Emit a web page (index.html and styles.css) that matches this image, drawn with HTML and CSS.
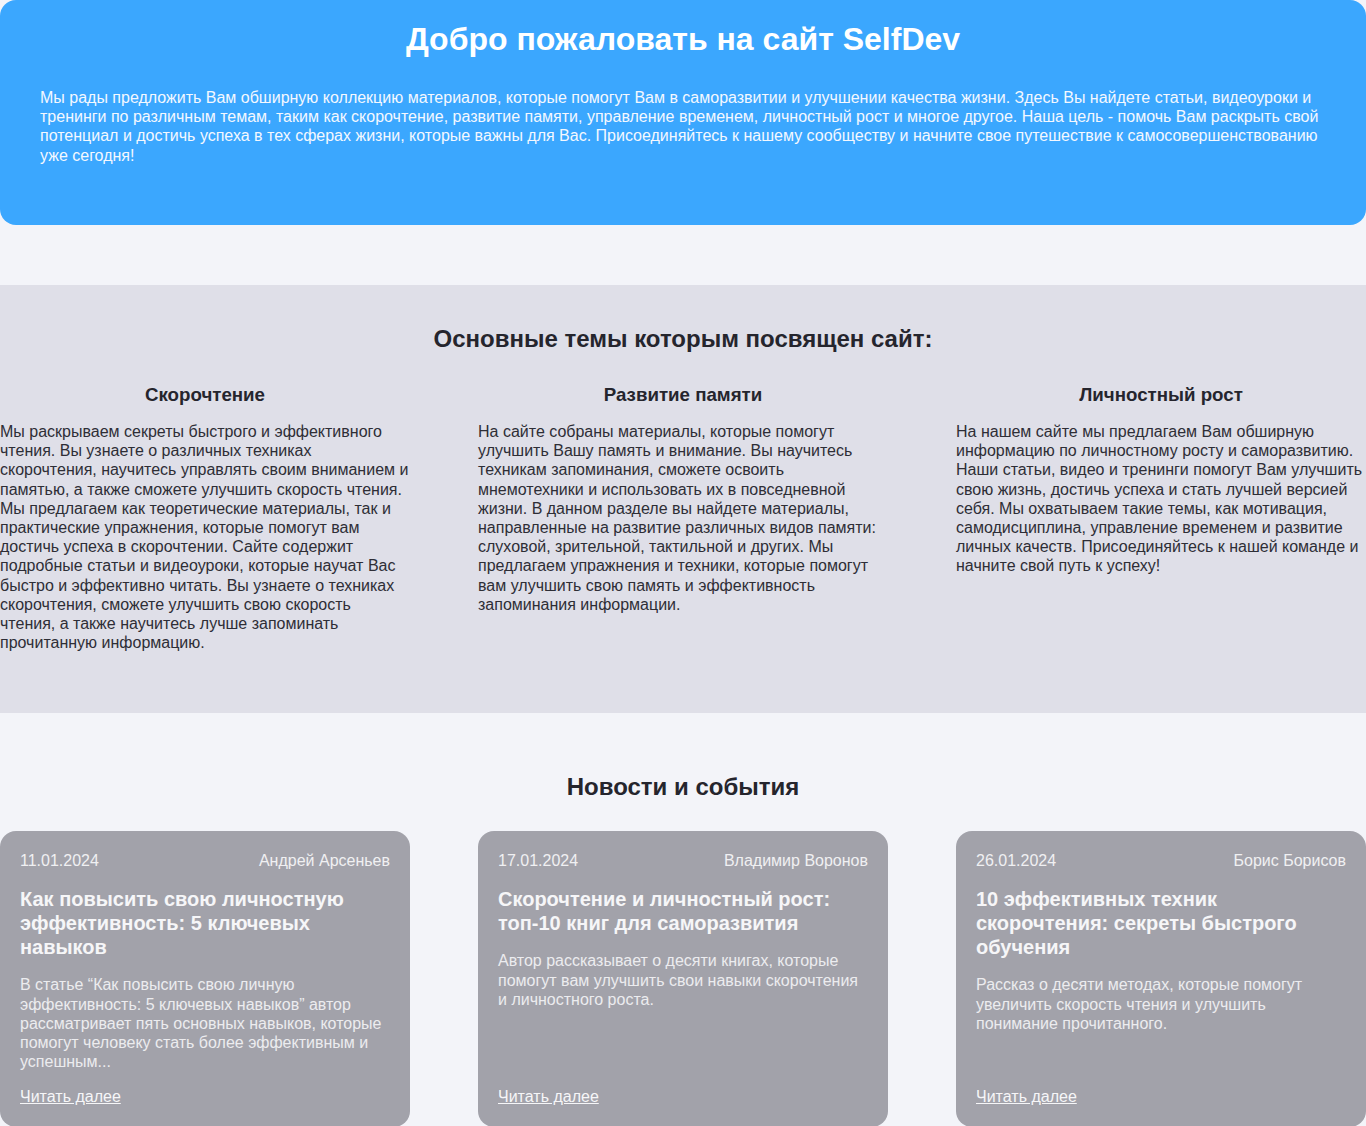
FILE: index.html
```html
<!DOCTYPE html>
<html lang="ru">
<head>
<meta charset="utf-8">
<title>SelfDev</title>
<link rel="stylesheet" href="styles.css">
</head>
<body>
<header class="hero">
  <h1 class="hero-title">Добро пожаловать на сайт SelfDev</h1>
  <p class="hero-text">Мы рады предложить Вам обширную коллекцию материалов, которые помогут Вам в саморазвитии и улучшении качества жизни. Здесь Вы найдете статьи, видеоуроки и тренинги по различным темам, таким как скорочтение, развитие памяти, управление временем, личностный рост и многое другое. Наша цель - помочь Вам раскрыть свой потенциал и достичь успеха в тех сферах жизни, которые важны для Вас. Присоединяйтесь к нашему сообществу и начните свое путешествие к самосовершенствованию уже сегодня!</p>
</header>

<section class="topics">
  <h2 class="section-title">Основные темы которым посвящен сайт:</h2>
  <div class="topic-grid">
    <div class="topic">
      <h3 class="topic-title">Скорочтение</h3>
      <p class="topic-text">Мы раскрываем секреты быстрого и эффективного чтения. Вы узнаете о различных техниках скорочтения, научитесь управлять своим вниманием и памятью, а также сможете улучшить скорость чтения. Мы предлагаем как теоретические материалы, так и практические упражнения, которые помогут вам достичь успеха в скорочтении. Сайте содержит подробные статьи и видеоуроки, которые научат Вас быстро и эффективно читать. Вы узнаете о техниках скорочтения, сможете улучшить свою скорость чтения, а также научитесь лучше запоминать прочитанную информацию.</p>
    </div>
    <div class="topic">
      <h3 class="topic-title">Развитие памяти</h3>
      <p class="topic-text">На сайте собраны материалы, которые помогут улучшить Вашу память и внимание. Вы научитесь техникам запоминания, сможете освоить мнемотехники и использовать их в повседневной жизни. В данном разделе вы найдете материалы, направленные на развитие различных видов памяти: слуховой, зрительной, тактильной и других. Мы предлагаем упражнения и техники, которые помогут вам улучшить свою память и эффективность запоминания информации.</p>
    </div>
    <div class="topic">
      <h3 class="topic-title">Личностный рост</h3>
      <p class="topic-text">На нашем сайте мы предлагаем Вам обширную информацию по личностному росту и саморазвитию. Наши статьи, видео и тренинги помогут Вам улучшить свою жизнь, достичь успеха и стать лучшей версией себя. Мы охватываем такие темы, как мотивация, самодисциплина, управление временем и развитие личных качеств. Присоединяйтесь к нашей команде и начните свой путь к успеху!</p>
    </div>
  </div>
</section>

<section class="news">
  <h2 class="section-title">Новости и события</h2>
  <div class="news-grid">
    <article class="card">
      <div class="card-meta"><span>11.01.2024</span><span>Андрей Арсеньев</span></div>
      <h3 class="card-title">Как повысить свою личностную эффективность: 5 ключевых навыков</h3>
      <p class="card-text">В статье “Как повысить свою личную эффективность: 5 ключевых навыков” автор рассматривает пять основных навыков, которые помогут человеку стать более эффективным и успешным...</p>
      <a class="card-link" href="#">Читать далее</a>
    </article>
    <article class="card">
      <div class="card-meta"><span>17.01.2024</span><span>Владимир Воронов</span></div>
      <h3 class="card-title">Скорочтение и личностный рост: топ-10 книг для саморазвития</h3>
      <p class="card-text">Автор рассказывает о десяти книгах, которые помогут вам улучшить свои навыки скорочтения и личностного роста.</p>
      <a class="card-link" href="#">Читать далее</a>
    </article>
    <article class="card">
      <div class="card-meta"><span>26.01.2024</span><span>Борис Борисов</span></div>
      <h3 class="card-title">10 эффективных техник скорочтения: секреты быстрого обучения</h3>
      <p class="card-text">Рассказ о десяти методах, которые помогут увеличить скорость чтения и улучшить понимание прочитанного.</p>
      <a class="card-link" href="#">Читать далее</a>
    </article>
  </div>
</section>
</body>
</html>
```
FILE: styles.css
```css
* { box-sizing: border-box; }
html, body { margin: 0; padding: 0; }
body {
  background: #f3f4f9;
  font-family: "Liberation Sans", Arial, sans-serif;
  color: #2b2b33;
}

.hero {
  background: #3ba7fe;
  color: #ffffff;
  border-radius: 16px;
  height: 225px;
  padding: 21px 40px 0;
}
.hero-title {
  margin: 0;
  font-size: 32px;
  font-weight: 700;
  text-align: center;
}
.hero-text {
  margin: 30px 0 0;
  font-size: 16px;
  line-height: 1.2;
  color: #f4f8ff;
}

.topics {
  margin-top: 60px;
  background: #dfdfe8;
  padding: 40px 0 61px;
}
.section-title {
  margin: 0;
  font-size: 24px;
  font-weight: 700;
  text-align: center;
  color: #25252d;
}
.topic-grid {
  display: grid;
  grid-template-columns: repeat(3, 410px);
  column-gap: 68px;
  margin-top: 31px;
}
.topic-title {
  margin: 0;
  font-size: 18.72px;
  font-weight: 700;
  text-align: center;
  color: #25252d;
}
.topic-text {
  margin: 16px 0 0;
  font-size: 16px;
  line-height: 1.2;
  color: #2e2e36;
}

.news {
  padding-top: 60px;
  padding-bottom: 40px;
}
.news-grid {
  display: grid;
  grid-template-columns: repeat(3, 410px);
  column-gap: 68px;
  margin-top: 30px;
}
.card {
  background: #a2a2aa;
  border-radius: 16px;
  padding: 20px;
  display: flex;
  flex-direction: column;
  color: #f2f2f4;
}
.card-meta {
  display: flex;
  justify-content: space-between;
  font-size: 16px;
  line-height: 1.2;
  color: #f0f0f2;
}
.card-title {
  margin: 17px 0 16px;
  font-size: 20px;
  line-height: 1.2;
  font-weight: 700;
  color: #f6f6f8;
}
.card-text {
  margin: 0;
  font-size: 16px;
  line-height: 1.2;
  color: #ececef;
}
.card-link {
  margin-top: auto;
  padding-top: 16px;
  font-size: 16px;
  line-height: 1.2;
  color: #f6f6f8;
  text-decoration: underline;
}
```
